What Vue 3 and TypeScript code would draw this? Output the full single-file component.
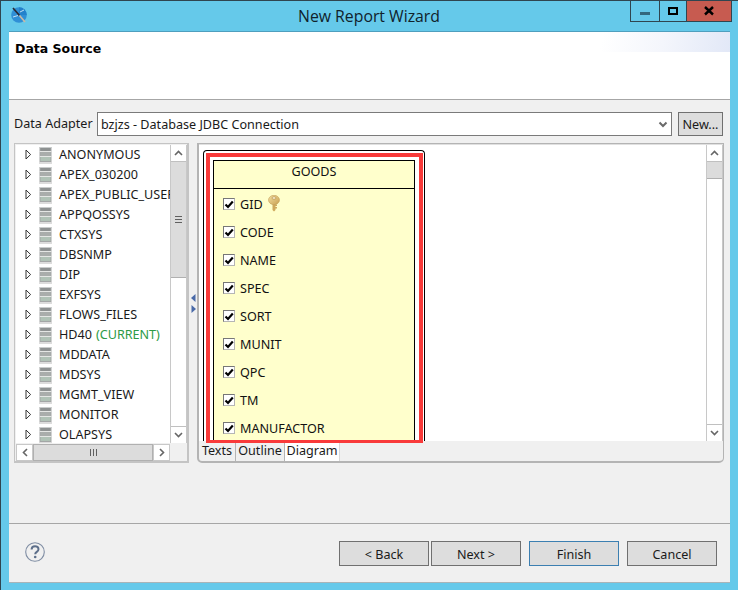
<script setup lang="ts">
const schemas: { name: string; tag?: string }[] = [
  { name: 'ANONYMOUS' },
  { name: 'APEX_030200' },
  { name: 'APEX_PUBLIC_USER' },
  { name: 'APPQOSSYS' },
  { name: 'CTXSYS' },
  { name: 'DBSNMP' },
  { name: 'DIP' },
  { name: 'EXFSYS' },
  { name: 'FLOWS_FILES' },
  { name: 'HD40', tag: '(CURRENT)' },
  { name: 'MDDATA' },
  { name: 'MDSYS' },
  { name: 'MGMT_VIEW' },
  { name: 'MONITOR' },
  { name: 'OLAPSYS' },
]
const columns = ['GID', 'CODE', 'NAME', 'SPEC', 'SORT', 'MUNIT', 'QPC', 'TM', 'MANUFACTOR']
const tabs = ['Texts', 'Outline', 'Diagram']
const buttons = ['< Back', 'Next >', 'Finish', 'Cancel']
</script>

<template>
  <div class="window">
    <header class="titlebar">
      <svg class="logo" width="18" height="18" viewBox="0 0 18 18">
        <circle cx="9" cy="9" r="7.8" fill="#2f8fd6" />
        <path d="M9 1.2a7.800 7.800 0 0 1 7.800 7.800L9 9z" fill="#2381cb" />
        <path d="M3 2L9.500 9.500" stroke="#2a2a36" stroke-width="1.700" />
        <path d="M9.500 9.500L15 16" stroke="#c9b9a4" stroke-width="1.700" />
        <path d="M3 11l5-1.500M10 6l4-2" stroke="#bfe0f5" stroke-width="1" />
      </svg>
      <span class="title">New Report Wizard</span>
      <div class="controls">
        <div class="ctl">
          <span class="min"></span>
        </div>
        <div class="ctl max-wrap">
          <span class="max"></span>
        </div>
        <div class="ctl close">
          <svg width="10" height="10" viewBox="0 0 10 10">
            <path d="M1 1L9 8.500M9 1L1 8.500" stroke="#000" stroke-width="2.400" />
          </svg>
        </div>
      </div>
    </header>

    <main class="client">
      <section class="banner">
        <div class="glow"></div>
        <h1>Data Source</h1>
      </section>

      <section class="content">
        <div class="adapter">
          <label>Data Adapter</label>
          <div class="combo">
            <span>bzjzs - Database JDBC Connection</span>
            <svg width="10" height="7" viewBox="0 0 10 7">
              <path d="M1.500 1.500L5 5l3.500-3.500" fill="none" stroke="#6a6a6a" stroke-width="2" />
            </svg>
          </div>
          <button class="btn new">New...</button>
        </div>

        <div class="panels">
          <div class="tree-panel">
            <div class="tree-top">
              <ul class="tree">
                <li v-for="s in schemas" :key="s.name">
                  <svg class="twist" width="7" height="11" viewBox="0 0 7 11">
                    <path d="M1 1l4.600 4.500L1 10z" fill="#fff" stroke="#333" />
                  </svg>
                  <svg class="db" width="13" height="17" viewBox="0 0 13 17">
                    <rect x="0.500" y="0" width="12" height="15" fill="#a3a6a6" />
                    <rect x="0.500" y="0" width="12" height="1" fill="#c9cccc" />
                    <rect x="1.500" y="1" width="10" height="3" fill="#8e9292" />
                    <rect x="0.500" y="4" width="12" height="1" fill="#e4e6e4" />
                    <rect x="1.500" y="5" width="10" height="4" fill="#a9adab" />
                    <rect x="0.500" y="9" width="12" height="1" fill="#e4e6e4" />
                    <rect x="1.500" y="10" width="10" height="4" fill="#b0c2b6" />
                    <rect x="0" y="15" width="13" height="2" fill="#dcdcdc" />
                  </svg>
                  <span class="name">{{ s.name }}</span>
                  <span v-if="s.tag" class="tag">{{ s.tag }}</span>
                </li>
              </ul>
              <div class="vbar">
                <div class="sb-btn">
                  <svg width="9" height="6" viewBox="0 0 9 6"><path d="M1 5l3.500-3.500L8 5" fill="none" stroke="#666" stroke-width="1.600" /></svg>
                </div>
                <div class="thumb-v">
                  <span class="grip-v"></span>
                </div>
                <div class="sb-space"></div>
                <div class="sb-btn">
                  <svg width="9" height="6" viewBox="0 0 9 6"><path d="M1 1l3.500 3.500L8 1" fill="none" stroke="#666" stroke-width="1.600" /></svg>
                </div>
              </div>
            </div>
            <div class="hbar">
              <div class="sb-btn h">
                <svg width="6" height="9" viewBox="0 0 6 9"><path d="M5 1L1.500 4.500 5 8" fill="none" stroke="#666" stroke-width="1.600" /></svg>
              </div>
              <div class="thumb-h"><span class="grip-h"></span></div>
              <div class="sb-btn h">
                <svg width="6" height="9" viewBox="0 0 6 9"><path d="M1 1l3.500 3.500L1 8" fill="none" stroke="#666" stroke-width="1.600" /></svg>
              </div>
            </div>
          </div>

          <div class="sash">
            <svg width="5" height="8" viewBox="0 0 5 8"><path d="M4.500 0v8L0 4z" fill="#4a6aa8" /></svg>
            <svg width="5" height="8" viewBox="0 0 5 8"><path d="M.5 0v8L5 4z" fill="#4a6aa8" /></svg>
          </div>

          <div class="editor">
            <div class="canvas-row">
              <div class="canvas">
                <div class="figure">
                  <div class="table">
                    <div class="table-head">GOODS</div>
                    <div v-for="(c, i) in columns" :key="c" class="col">
                      <span class="check">
                        <svg width="10" height="9" viewBox="0 0 10 9"><path d="M1.500 4.500l2.500 2.500L8.800 1.500" fill="none" stroke="#000" stroke-width="2.200" /></svg>
                      </span>
                      <span>{{ c }}</span>
                      <svg v-if="i === 0" class="key" width="12" height="17" viewBox="0 0 12 17">
                        <defs>
                          <linearGradient id="gold" x1="0" x2="1" y1="0" y2="1">
                            <stop offset="0" stop-color="#f3dfa2" />
                            <stop offset="1" stop-color="#c9a050" />
                          </linearGradient>
                        </defs>
                        <path d="M4.500 8h3v1.500H9v1.500H7.500v1H9v1.500H7.500V15L6 16.500 4.500 15z" fill="#cfa95c" />
                        <ellipse cx="6" cy="5" rx="5.500" ry="4.700" fill="url(#gold)" stroke="#c4a05a" stroke-width=".6" />
                        <ellipse cx="6" cy="3" rx="2" ry="1.200" fill="#fff8e0" stroke="#a87e34" stroke-width=".6" />
                      </svg>
                    </div>
                  </div>
                </div>
                <div class="highlight"></div>
              </div>
              <div class="vbar main">
                <div class="sb-btn">
                  <svg width="9" height="6" viewBox="0 0 9 6"><path d="M1 5l3.500-3.500L8 5" fill="none" stroke="#666" stroke-width="1.600" /></svg>
                </div>
                <div class="thumb-main"></div>
                <div class="sb-space"></div>
                <div class="sb-btn">
                  <svg width="9" height="6" viewBox="0 0 9 6"><path d="M1 1l3.500 3.500L8 1" fill="none" stroke="#666" stroke-width="1.600" /></svg>
                </div>
              </div>
            </div>
            <div class="tabs">
              <span v-for="t in tabs" :key="t" class="tab" :class="{ active: t === 'Diagram' }">{{ t }}</span>
            </div>
          </div>
        </div>
      </section>

      <footer class="footer">
        <svg class="help" width="20" height="20" viewBox="0 0 20 20">
          <circle cx="10" cy="10" r="9.300" fill="none" stroke="#7f8da3" stroke-width="1.100" />
          <path d="M6.600 7.400c0-4.300 6.900-4.300 6.900-.2 0 2.700-3.300 2.600-3.300 5" fill="none" stroke="#5d6f8a" stroke-width="2" />
          <circle cx="10.200" cy="15" r="1.300" fill="#5d6f8a" />
        </svg>
        <div class="actions">
          <button v-for="b in buttons" :key="b" class="btn action" :class="{ primary: b === 'Finish' }">{{ b }}</button>
        </div>
      </footer>
    </main>
  </div>
</template>

<style>
html, body { margin: 0; background: #65c9ea; }
</style>

<style scoped>
.window {
  position: relative;
  box-sizing: border-box;
  width: 738px;
  height: 590px;
  display: flex;
  flex-direction: column;
  background: #65c9ea;
  border-top: 1px solid #2f4550;
  border-left: 1px solid #2f4550;
  font-family: "Noto Sans", sans-serif;
  font-size: 12.6px;
  color: #1a1a1a;
  overflow: hidden;
}
.titlebar {
  height: 30px;
  flex: none;
  display: flex;
  align-items: center;
  justify-content: center;
}
.logo { position: absolute; left: 9px; top: 5px; }
.title { font-family: "Open Sans", sans-serif; font-size: 15.8px; color: #10222c; margin-top: -1px; margin-left: -1px; }
.controls {
  position: absolute;
  left: 629px;
  top: 0;
  width: 102px;
  height: 21px;
  box-sizing: border-box;
  display: flex;
  border: 1px solid #2f4550;
  border-top: 0;
}
.ctl {
  width: 28px;
  display: flex;
  align-items: center;
  justify-content: center;
}
.max-wrap { width: 26px; border-left: 1px solid #2f4550; border-right: 1px solid #2f4550; }
.min { width: 10px; height: 3px; background: #33697f; margin-top: 4px; }
.max { width: 6px; height: 4px; border: 2.500px solid #000; margin-top: -1px; }
.close { flex: 1; background: #c75b50; }
.client {
  flex: 1;
  margin: 0 8px 7px 8px;
  display: flex;
  flex-direction: column;
  background: #f0f0f0;
  border-top: 1px solid #4f9fbe;
  border-bottom: 1px solid #a8b4b8;
  min-height: 0;
}
.banner {
  position: relative;
  height: 67px;
  flex: none;
  background: #fff;
  border-bottom: 1px solid #a6a6a6;
}
.glow {
  position: absolute;
  right: 0;
  top: 0;
  width: 150px;
  height: 20px;
  background: linear-gradient(100deg, #fff 15%, #f4f6fc 55%, #e2e8f7 100%);
}
h1 {
  position: relative;
  margin: 0;
  padding: 8px 0 0 6px;
  font-family: "DejaVu Sans", sans-serif;
  font-size: 12.5px;
  font-weight: 700;
  line-height: 17px;
  color: #000;
}
.content {
  flex: 1;
  padding: 12px 5px 0;
}
.adapter {
  display: flex;
  align-items: stretch;
  height: 24px;
}
label { width: 83px; line-height: 24px; flex: none; }
.combo {
  width: 575px;
  flex: none;
  box-sizing: border-box;
  background: #fff;
  border: 1px solid #7a7a7a;
  display: flex;
  align-items: center;
  justify-content: space-between;
  padding: 0 3px 0 3px;
}
.btn {
  box-sizing: border-box;
  background: #dddddd;
  border: 1px solid #707070;
  font: inherit;
  color: #1a1a1a;
  padding: 0;
}
.new { width: 45px; margin-left: 6px; }
.panels {
  display: grid;
  grid-template-columns: 175px 8px 527px;
  height: 320px;
  margin-top: 7px;
}
.tree-panel {
  box-sizing: border-box;
  border: 2px solid #c4c4c4;
  border-width: 1px 2px 2px 1px;
  padding: 1px 0 0 1px;
  background: #f0f0f0;
  display: flex;
  flex-direction: column;
}
.tree-top {
  height: 298px;
  display: flex;
  flex: none;
  background: #fff;
}
.tree {
  list-style: none;
  margin: -1px 0 0;
  padding: 0;
  flex: 1;
  min-width: 0;
  overflow: hidden;
}
.tree li {
  height: 20px;
  display: flex;
  align-items: center;
  white-space: nowrap;
}
.twist { margin-left: 9px; flex: none; }
.db { margin-left: 7px; flex: none; margin-top: 2px; }
.name { margin-left: 7px; }
.tag { margin-left: 4px; color: #2c9a46; }
.vbar {
  width: 17px;
  flex: none;
  box-sizing: border-box;
  border-left: 1px solid #c8c8c8;
  border-right: 1px solid #c8c8c8;
  display: flex;
  flex-direction: column;
  background: #fff;
}
.sb-btn {
  height: 17px;
  flex: none;
  box-sizing: border-box;
  display: flex;
  align-items: center;
  justify-content: center;
  background: #fff;
  border-bottom: 1px solid #c0c0c0;
}
.sb-space { flex: 1; }
.sb-space + .sb-btn { border-bottom: 0; border-top: 1px solid #c0c0c0; }
.thumb-v {
  height: 116px;
  box-sizing: border-box;
  background: #dcdcdc;
  border-bottom: 1px solid #b0b0b0;
  display: flex;
  align-items: center;
  justify-content: center;
}
.grip-v {
  width: 7px;
  height: 7px;
  background: repeating-linear-gradient(#606060 0 1px, #dcdcdc 1px 3px);
}
.hbar {
  height: 17px;
  margin-top: 1px;
  display: flex;
  width: 154px;
  box-sizing: border-box;
  background: #fff;
}
.sb-btn.h { width: 17px; height: 17px; border: 1px solid #c8c8c8; }
.thumb-h {
  width: 120px;
  box-sizing: border-box;
  background: #dcdcdc;
  border: 1px solid #b0b0b0;
  display: flex;
  align-items: center;
  justify-content: center;
}
.grip-h {
  width: 7px;
  height: 7px;
  background: repeating-linear-gradient(90deg, #606060 0 1px, #dcdcdc 1px 3px);
}
.sash {
  display: flex;
  flex-direction: column;
  align-items: center;
  justify-content: center;
  gap: 3px;
}
.editor {
  box-sizing: border-box;
  border: 1px solid #b4b4b4;
  border-width: 1px 1px 2px 2px;
  border-radius: 0 0 5px 5px;
  display: flex;
  flex-direction: column;
  background: #f0f0f0;
}
.canvas-row {
  height: 297px;
  flex: none;
  display: flex;
  background: #fff;
  border-top: 1px solid #e0e0e0;
  box-sizing: border-box;
}
.canvas {
  position: relative;
  flex: 1;
  overflow: visible;
  min-width: 0;
}
.figure {
  position: absolute;
  left: 4px;
  top: 5px;
  width: 222px;
  height: 291px;
  box-sizing: border-box;
  border: 1px solid #000;
  border-bottom: 0;
  border-radius: 4px 4px 0 0;
  background: #fff;
  overflow: hidden;
}
.table {
  margin: 9px 0 0 9px;
  width: 202px;
  box-sizing: border-box;
  height: 290px;
  border: 1px solid #000;
  border-bottom: 0;
  background: #ffffcc;
}
.table-head {
  height: 28px;
  line-height: 22px;
  box-sizing: border-box;
  border-bottom: 1px solid #000;
  text-align: center;
  color: #111;
  margin-bottom: 1px;
}
.col {
  height: 28px;
  display: flex;
  align-items: center;
  padding-left: 9px;
  color: #111;
}
.check {
  width: 12px;
  height: 12px;
  box-sizing: border-box;
  border: 1px solid #777;
  border-right-color: #b5b5b5;
  border-bottom-color: #b5b5b5;
  background: #fff;
  margin-right: 5px;
  display: flex;
  align-items: center;
  justify-content: center;
}
.key { margin-left: 5px; margin-top: -1px; }
.highlight {
  position: absolute;
  left: 7px;
  top: 8px;
  width: 217px;
  height: 290px;
  box-sizing: border-box;
  border: 4px solid #f93a3a;
  border-bottom-width: 3px;
  z-index: 2;
}
.thumb-main {
  height: 17px;
  box-sizing: border-box;
  background: #dcdcdc;
  border-bottom: 1px solid #b0b0b0;
}
.tabs {
  display: flex;
  height: 20px;
}
.tab {
  box-sizing: border-box;
  height: 20px;
  line-height: 20px;
  text-align: center;
  border-right: 1px solid #b4b4b4;
  white-space: nowrap;
}
.tab:nth-child(1) { width: 37px; }
.tab:nth-child(2) { width: 49px; }
.tab:nth-child(3) { width: 55px; background: #fff; border-right-color: #d8d8d8; }
.footer {
  height: 59px;
  flex: none;
  margin-top: auto;
  box-sizing: border-box;
  border-top: 1px solid #a6a6a6;
  display: flex;
  align-items: flex-start;
  justify-content: space-between;
  padding: 17px 13px 0 16px;
}
.help { margin-top: 1px; }
.actions { display: flex; }
.action { width: 90px; height: 25px; margin-left: 8px; padding-top: 1px; }
.action:first-child { margin-left: 0; }
.action:nth-child(2) { margin-left: 2px; }
.primary { border-color: #3c7fb1; }
</style>
